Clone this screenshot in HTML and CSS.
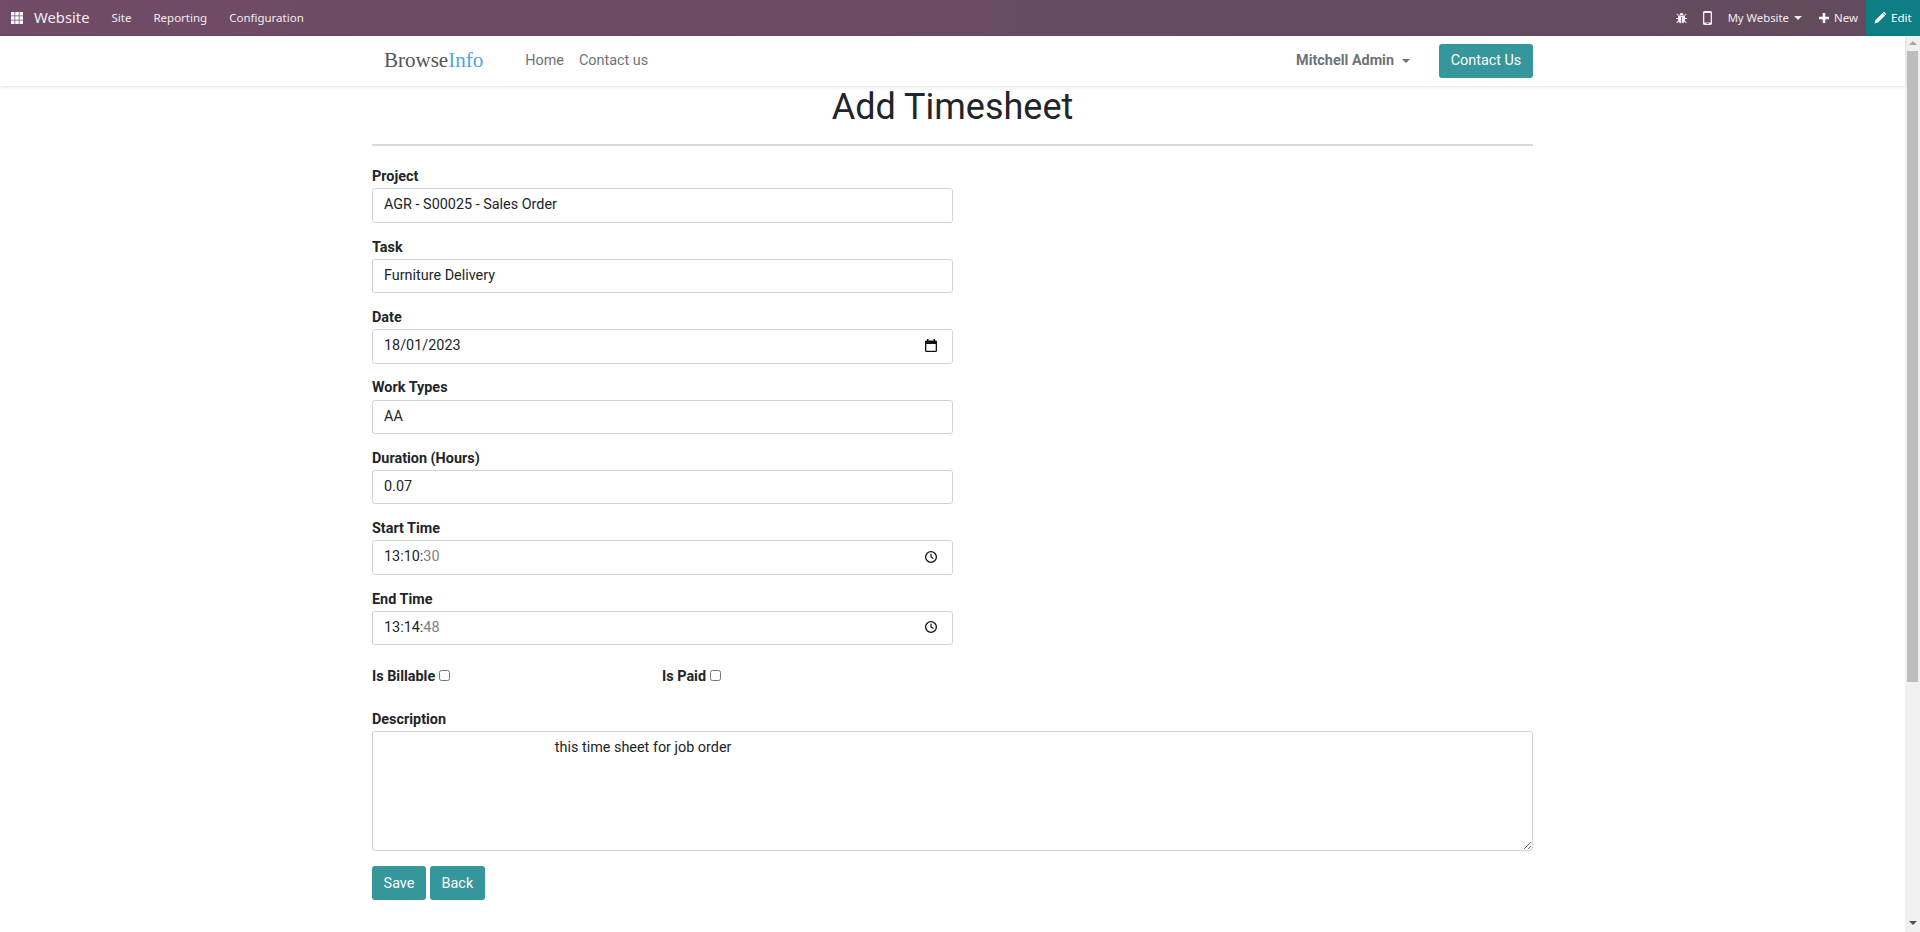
FILE: index.html
```html
<!DOCTYPE html>
<html lang="en">
<head>
<meta charset="utf-8">
<title>Add Timesheet</title>
<link rel="stylesheet" href="styles.css">
</head>
<body>
<header class="topbar">
  <div class="topbar-left">
    <svg class="apps" viewBox="0 0 12 12" width="12" height="12"><path fill="#fff" d="M0 0h3.500v3.500H0zM4.250 0h3.500v3.500h-3.500zM8.500 0H12v3.500H8.500zM0 4.250h3.500v3.500H0zM4.250 4.250h3.500v3.500h-3.500zM8.500 4.250H12v3.500H8.500zM0 8.500h3.500V12H0zM4.250 8.500h3.500V12h-3.500zM8.500 8.500H12V12H8.500z"/></svg>
    <span class="brand">Website</span>
    <span class="menu">Site</span>
    <span class="menu">Reporting</span>
    <span class="menu">Configuration</span>
  </div>
  <div class="topbar-right">
    <svg class="bug" viewBox="0 0 12 12" width="11" height="12"><path fill="#f2eef1" d="M3.800 2.600C4 1.300 4.900.6 6 .6s2 .7 2.200 2zM3 3.400h6c.5 0 .8.300.8.800v4.200C9.800 10.400 8 11.600 6.400 11.600V5h-.8v6.600C4 11.600 2.200 10.400 2.200 8.400V4.200c0-.5.300-.8.800-.8zM.4 1.800l.7-.7 1.800 1.800-.7.700zM11.600 1.800l-.7-.7-1.800 1.800.7.700zM0 6.100h2.200v1H0zM9.800 6.100H12v1H9.800zM.3 11l1.900-1.900.7.700L1 11.700zM11.700 11l-1.900-1.900-.7.700 1.900 1.900z"/></svg>
    <svg class="phone" viewBox="0 0 9 14" width="9" height="14"><path fill="#f2eef1" fill-rule="evenodd" d="M1.500 0h6C8.300 0 9 .7 9 1.500v11c0 .8-.7 1.500-1.500 1.500h-6C.7 14 0 13.300 0 12.500v-11C0 .7.700 0 1.500 0zM1.300 2v9.500h6.400V2zM3.500 12v1h2v-1z"/></svg>
    <span class="site-pick">My Website</span>
    <span class="caret-light"></span>
    <svg class="plus" viewBox="0 0 10 10" width="10" height="10"><path fill="#fff" d="M3.700 0h2.600v3.700H10v2.600H6.300V10H3.700V6.300H0V3.700h3.700z"/></svg>
    <span class="new">New</span>
    <div class="edit">
      <svg viewBox="0 0 12 12" width="12" height="12"><path fill="#fff" d="M8.600.9 11.100 3.400 4 10.500.4 11.600 1.500 8zM9.300.2c.4-.3.900-.3 1.200 0l1.300 1.300c.3.300.3.800 0 1.200l-.3.300-2.500-2.500z"/></svg>
      <span>Edit</span>
    </div>
  </div>
</header>
<div class="shell">
  <div class="page">
    <nav class="navbar">
      <div class="navbar-inner">
        <div class="nav-left">
          <span class="logo">Browse<span class="logo-accent">Info</span></span>
          <a class="nav-link nav-home">Home</a>
          <a class="nav-link">Contact us</a>
        </div>
        <div class="nav-right">
          <span class="user">Mitchell Admin</span>
          <span class="caret-dark"></span>
          <a class="btn btn-contact">Contact Us</a>
        </div>
      </div>
    </nav>
    <main class="content">
      <h1 class="title">Add Timesheet</h1>
      <hr class="rule">
      <form class="form">
        <div class="row"><label class="label">Project</label><div class="control">AGR - S00025 - Sales Order</div></div>
        <div class="row"><label class="label">Task</label><div class="control">Furniture Delivery</div></div>
        <div class="row"><label class="label">Date</label>
          <div class="control"><span>18/01/2023</span>
            <svg class="picker" viewBox="0 0 14 14" width="14" height="14"><path fill="#111" fill-rule="evenodd" d="M3 0h1.500v1.500h5V0H11v1.500h.8c.7 0 1.200.5 1.200 1.200v9.100c0 .7-.5 1.200-1.200 1.200H2.200C1.500 13 1 12.500 1 11.800V2.700C1 2 1.500 1.500 2.200 1.500H3zM2.300 5v6.700h9.400V5z"/></svg>
          </div>
        </div>
        <div class="row"><label class="label">Work Types</label><div class="control">AA</div></div>
        <div class="row"><label class="label">Duration (Hours)</label><div class="control">0.07</div></div>
        <div class="row"><label class="label">Start Time</label>
          <div class="control"><span>13:10:<span class="muted">30</span></span>
            <svg class="picker" viewBox="0 0 14 14" width="14" height="14"><circle cx="7" cy="7" r="5.400" fill="none" stroke="#111" stroke-width="1.300"/><path fill="none" stroke="#111" stroke-width="1.200" d="M7 3.800V7l2.400 1.500"/></svg>
          </div>
        </div>
        <div class="row"><label class="label">End Time</label>
          <div class="control"><span>13:14:<span class="muted">48</span></span>
            <svg class="picker" viewBox="0 0 14 14" width="14" height="14"><circle cx="7" cy="7" r="5.400" fill="none" stroke="#111" stroke-width="1.300"/><path fill="none" stroke="#111" stroke-width="1.200" d="M7 3.800V7l2.400 1.500"/></svg>
          </div>
        </div>
        <div class="checks">
          <div class="check"><label class="label-inline">Is Billable</label><input class="box" type="checkbox"></div>
          <div class="check"><label class="label-inline">Is Paid</label><input class="box" type="checkbox"></div>
        </div>
        <label class="label label-desc">Description</label>
        <textarea class="area" spellcheck="false">                                                this time sheet for job order</textarea>
        <div class="actions">
          <a class="btn">Save</a>
          <a class="btn">Back</a>
        </div>
      </form>
    </main>
  </div>
  <div class="scrollbar">
    <span class="arrow-up"></span>
    <div class="thumb"></div>
    <span class="arrow-down"></span>
  </div>
</div>
</body>
</html>
```
FILE: styles.css
```css
* { box-sizing: border-box; }
html, body { margin: 0; height: 932px; overflow: hidden; }
body { font-family: Roboto, "Liberation Sans", sans-serif; font-size: 14.400px; line-height: 21.600px; color: #212529; background: #fff; display: flex; flex-direction: column; }

.topbar { height: 36px; flex: none; display: flex; justify-content: space-between; background: linear-gradient(90deg, #714b67, #624b5c); color: #f1edf0; font-family: "Noto Sans", "Open Sans", sans-serif; font-size: 12px; }
.topbar-left, .topbar-right { display: flex; align-items: center; }
.apps { margin-left: 11px; }
.brand { margin-left: 11px; font-size: 14.800px; }
.menu { margin-left: 22px; font-size: 11.500px; }
.menu:first-of-type { margin-left: 21px; }
.bug { margin-right: 16px; }
.phone { margin-right: 15.500px; }
.site-pick { font-size: 11.300px; }
.caret-light { margin-left: 5px; border-top: 4px solid #f1edf0; border-left: 4px solid transparent; border-right: 4px solid transparent; }
.plus { margin-left: 17px; }
.new { margin-left: 5px; font-size: 11.500px; }
.edit { margin-left: 8px; width: 54px; height: 36px; background: #0c7e84; display: flex; align-items: center; padding-left: 8px; gap: 5px; font-size: 11.500px; color: #fff; }

.shell { flex: 1; min-height: 0; display: flex; }
.page { flex: 1; min-width: 0; }
.navbar { height: 50px; background: #fff; box-shadow: 0 1px 4px rgba(0, 0, 0, .12); position: relative; }
.navbar-inner { width: 1161px; height: 50px; margin: 0 auto; padding-bottom: 1px; display: flex; justify-content: space-between; align-items: center; }
.nav-left, .nav-right { display: flex; align-items: center; }
.logo { margin-left: 12px; font-family: "Liberation Serif", serif; font-size: 21px; color: #555; }
.logo-accent { color: #4fa6e2; }
.nav-link { color: #6d7379; }
.nav-home { margin-left: 42px; margin-right: 15px; }
.user { color: #6d7379; font-weight: 700; }
.caret-dark { margin-left: 8px; border-top: 4.500px solid #6d7379; border-left: 4.500px solid transparent; border-right: 4.500px solid transparent; }
.btn { display: inline-flex; align-items: center; justify-content: center; height: 34px; padding: 0 11.600px; background: #35969b; color: #fff; border-radius: 3px; }
.nav-right .btn-contact { margin-left: 29px; margin-top: 1px; width: 94px; padding: 0; }

.content { width: 1161px; margin: 0 auto; }
.title { margin: 0; height: 42px; line-height: 42px; font-size: 36px; font-weight: 400; text-align: center; color: #212529; }
.rule { margin: 15.500px 0 0; border: 0; height: 2px; background: #d5d8dc; }
.form { padding-top: 20.800px; }
.row { width: 580.500px; margin-bottom: 13.800px; }
.label { display: block; height: 21.600px; margin-bottom: .600px; font-weight: 700; color: #212529; }
.control { height: 34.400px; display: flex; align-items: center; padding: 0 11px 1px; border: 1px solid #ced4da; border-radius: 3px; color: #212529; }
.muted { color: #7c8288; }
.picker { margin-left: auto; margin-right: 3px; }

.checks { width: 580.500px; display: grid; grid-template-columns: 290px 290px; margin-top: 20.400px; height: 21.600px; }
.check { display: flex; align-items: center; }
.label-inline { font-weight: 700; }
.box { width: 11px; height: 11px; margin: 0 0 1px 4px; }
.label-desc { margin-top: 22px; }

.area { display: block; width: 1161px; height: 120px; padding: 5px 10.500px; border: 1px solid #ced4da; border-radius: 3px; font: inherit; color: #212529; outline: 0; }
.actions { display: flex; gap: 4px; margin-top: 15px; }

.scrollbar { width: 15px; flex: none; background: #f0f0f0; display: flex; flex-direction: column; align-items: center; }
.arrow-up { margin-top: 5px; border-bottom: 4px solid #a3a3a3; border-left: 4px solid transparent; border-right: 4px solid transparent; }
.thumb { width: 11px; height: 631px; margin-top: 6px; background: #bdbdbd; }
.arrow-down { margin-top: auto; margin-bottom: 7px; border-top: 4px solid #505050; border-left: 4px solid transparent; border-right: 4px solid transparent; }
```
